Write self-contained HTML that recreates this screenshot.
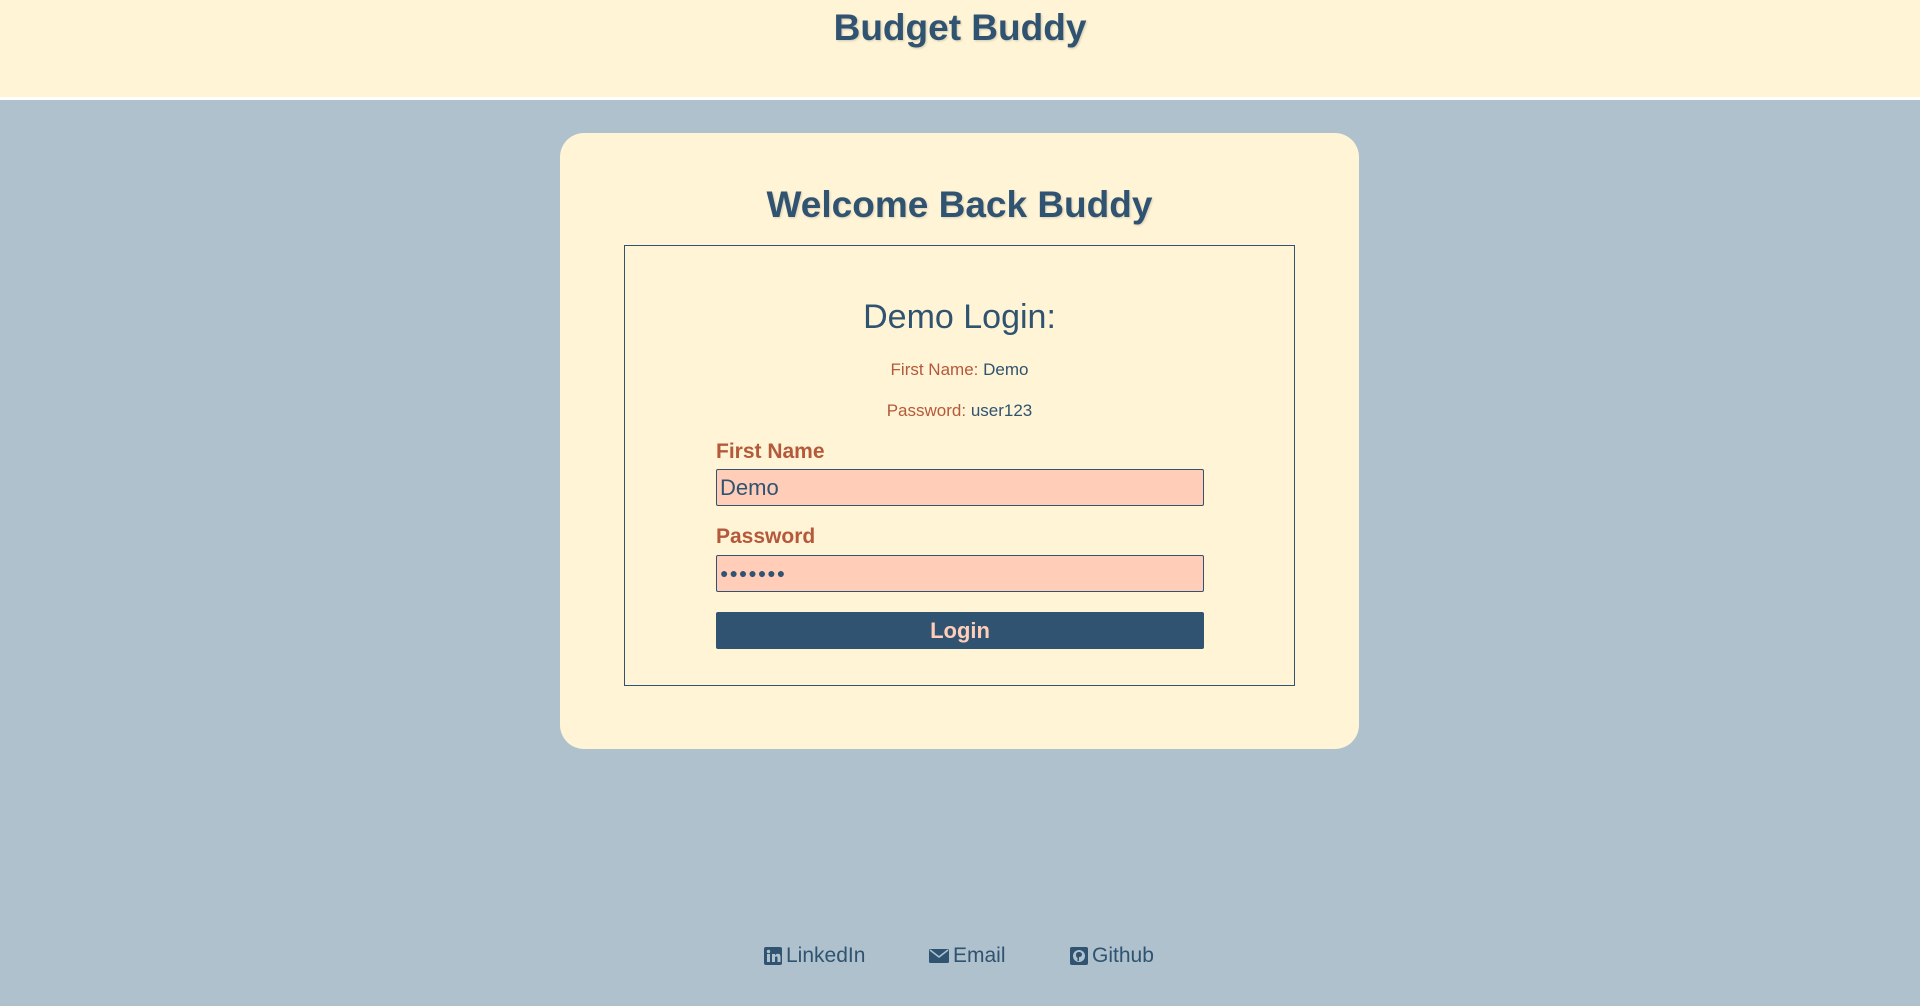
<!DOCTYPE html>
<html><head><meta charset="utf-8"><style>
*{box-sizing:border-box;margin:0;padding:0}
body{width:1920px;height:1006px;background:#aec1cd;font-family:"Liberation Sans",sans-serif;color:#2f5370;position:relative;overflow:hidden}
header{position:absolute;left:0;top:0;width:1920px;height:100px;background:#fff4d6;border-bottom:3px solid #fff;text-align:center}
header h1{font-size:37px;font-weight:bold;line-height:56px;text-shadow:1px 1px 2px rgba(0,0,0,.18)}
.card{position:absolute;left:560px;top:133px;width:799px;height:616px;background:#fff4d6;border-radius:24px}
.card h2{position:absolute;left:0;width:100%;text-align:center;font-size:37px;line-height:54px;top:45px;text-shadow:1px 1px 2px rgba(0,0,0,.15)}
.box{position:absolute;left:64px;top:112px;width:671px;height:441px;border:1px solid #2f5370}
.abs{position:absolute;left:0;width:100%;text-align:center}
.o{color:#b4593a}
.lbl{position:absolute;left:91px;font-size:21px;font-weight:bold;color:#b4593a}
.inp{position:absolute;left:91px;width:488px;height:37px;background:#ffcdb8;border:1px solid #2f5370;border-radius:2px;font-size:22px;padding-left:3px;line-height:35px}
.btn{position:absolute;left:91px;top:366px;width:488px;height:37px;background:#2f5370;border-radius:2px;color:#ffcdb8;font-weight:bold;font-size:22px;text-align:center;line-height:37px}
.ft{position:absolute;top:944px;font-size:21px;display:flex;align-items:center;gap:4px}
</style></head><body>
<header><h1>Budget Buddy</h1></header>
<div class="card">
<h2>Welcome Back Buddy</h2>
<div class="box">
<div class="abs" style="top:52px;font-size:34px">Demo Login:</div>
<div class="abs" style="top:114px;font-size:17px"><span class="o">First Name:</span> Demo</div>
<div class="abs" style="top:155px;font-size:17px"><span class="o">Password:</span> user123</div>
<div class="lbl" style="top:194px">First Name</div>
<div class="inp" style="top:223px">Demo</div>
<div class="lbl" style="top:279px">Password</div>
<div class="inp" style="top:309px;font-size:14px;letter-spacing:1px">●●●●●●●</div>
<div class="btn">Login</div>
</div></div>
<div class="ft" style="left:764px"><svg width="18" height="18" viewBox="0 0 18 18"><rect width="18" height="18" rx="2" fill="#2f5370"/><rect x="3" y="7" width="3" height="8" fill="#aec1cd"/><circle cx="4.5" cy="4.5" r="1.7" fill="#aec1cd"/><path d="M8 7h3v1.5c.6-1 1.6-1.7 3-1.7 2 0 2.5 1.4 2.5 3.5V15h-3v-4c0-1-.3-1.6-1.2-1.6S11 10 11 11v4H8z" fill="#aec1cd"/></svg>LinkedIn</div>
<div class="ft" style="left:929px"><svg width="20" height="16" viewBox="0 0 20 16"><rect y="1" width="20" height="14" rx="1.5" fill="#2f5370"/><path d="M1 2l9 7 9-7" stroke="#aec1cd" stroke-width="1.6" fill="none"/></svg>Email</div>
<div class="ft" style="left:1070px"><svg width="18" height="18" viewBox="0 0 18 18"><rect width="18" height="18" rx="2" fill="#2f5370"/><circle cx="9" cy="9" r="6" fill="#aec1cd"/><path d="M6 7.5c0-1.5 1.3-2.5 3-2.5s3 1 3 2.5-1.3 2.5-3 2.5v4h-1.5v-3c-1-.5-1.5-1.5-1.5-3.5z" fill="#2f5370"/></svg>Github</div>
</body></html>
